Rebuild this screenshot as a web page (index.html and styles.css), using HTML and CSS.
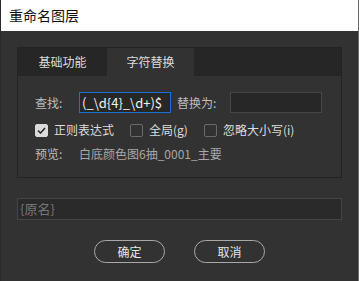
FILE: index.html
```html
<!DOCTYPE html>
<html lang="zh">
<head>
    <meta charset="UTF-8">
    <title>重命名图层</title>
    <link rel="stylesheet" href="styles.css">
</head>
<body>
    <div class="window">
        <div class="titlebar">重命名图层</div>

        <div class="dialog">
            <div class="panel">
                <div class="tabs">
                    <div class="tab">基础功能</div>
                    <div class="tab active">字符替换</div>
                </div>

                <div class="panel-body">
                    <div class="row">
                        <span class="label">查找:</span>
                        <div class="field focused">(_\d{4}_\d+)$</div>
                        <span class="label label-replace">替换为:</span>
                        <div class="field"></div>
                    </div>

                    <div class="row checks">
                        <label class="check"><span class="box checked">
                            <svg width="9" height="7" viewBox="0 0 9 7"><path d="M1 3.5 L3.5 6 L8 1" fill="none" stroke="#2b2b2b" stroke-width="1.6"/></svg>
                        </span>正则表达式</label>
                        <label class="check"><span class="box"></span>全局(g)</label>
                        <label class="check"><span class="box"></span>忽略大小写(i)</label>
                    </div>

                    <div class="row preview">
                        <span class="label">预览:</span>
                        <span class="preview-text">白底颜色图6抽_0001_主要</span>
                    </div>
                </div>
            </div>

            <div class="name-field">{原名}</div>

            <div class="buttons">
                <button class="btn">确定</button>
                <button class="btn">取消</button>
            </div>
        </div>
    </div>
</body>
</html>
```

FILE: styles.css
```css
* {
    margin: 0;
    padding: 0;
    box-sizing: border-box;
}

body {
    background: #323232;
    font-family: "Noto Sans CJK SC", "Noto Sans", sans-serif;
    font-size: 12px;
    color: #d0d0d0;
}

.window {
    width: 359px;
    height: 281px;
    border-right: 1px solid #6a6a6a;
    border-left: 1px solid #2a2a2a;
    overflow: hidden;
}

.titlebar {
    height: 31px;
    background: #fff;
    color: #111;
    font-size: 14px;
    line-height: 30px;
    padding-left: 8px;
}

.dialog {
    padding: 16px 16px 0 16px;
}

/* Вкладки */
.panel {
    border: 1px solid #232323;
    height: 131px;
}

.tabs {
    display: flex;
    height: 28px;
    background: #262626;
}

.tab {
    width: 89px;
    line-height: 28px;
    text-align: center;
    font-size: 12px;
    color: #dcdcdc;
}

.tab.active {
    width: 87px;
    background: #323232;
}

.panel-body {
    padding: 16px 0 0 17px;
}

.row {
    display: flex;
    align-items: center;
}

.label {
    color: #bdbdbd;
    width: 44px;
}

.label-replace {
    width: auto;
    margin: 0 14px 0 6px;
}

.field {
    width: 92px;
    height: 21px;
    background: #272727;
    border: 1px solid #464646;
    color: #f0f0f0;
    font-size: 13px;
    line-height: 19px;
    padding-left: 2px;
    white-space: nowrap;
    overflow: hidden;
}

.field.focused {
    border-color: #1a6fd8;
}

.checks {
    margin-top: 10px;
    gap: 16px;
}

.check {
    display: flex;
    align-items: center;
    color: #dcdcdc;
    font-size: 12px;
    line-height: 14px;
}

.box {
    width: 13px;
    height: 13px;
    border: 1px solid #6a6a6a;
    border-radius: 2px;
    margin-right: 6px;
    display: flex;
    align-items: center;
    justify-content: center;
}

.box.checked {
    background: #dadada;
    border-color: #dadada;
}

.preview {
    margin-top: 8px;
}

.preview-text {
    color: #a8a8a8;
}

.name-field {
    margin-top: 20px;
    height: 22px;
    background: #2a2a2a;
    border: 1px solid #454545;
    color: #767676;
    font-size: 13px;
    line-height: 20px;
    padding-left: 2px;
}

.buttons {
    display: flex;
    justify-content: center;
    gap: 29px;
    margin-top: 20px;
}

.btn {
    width: 71px;
    height: 23px;
    border: 1.5px solid #a8a8a8;
    border-radius: 12px;
    background: transparent;
    color: #e6e6e6;
    font-family: inherit;
    font-size: 12px;
}
```
